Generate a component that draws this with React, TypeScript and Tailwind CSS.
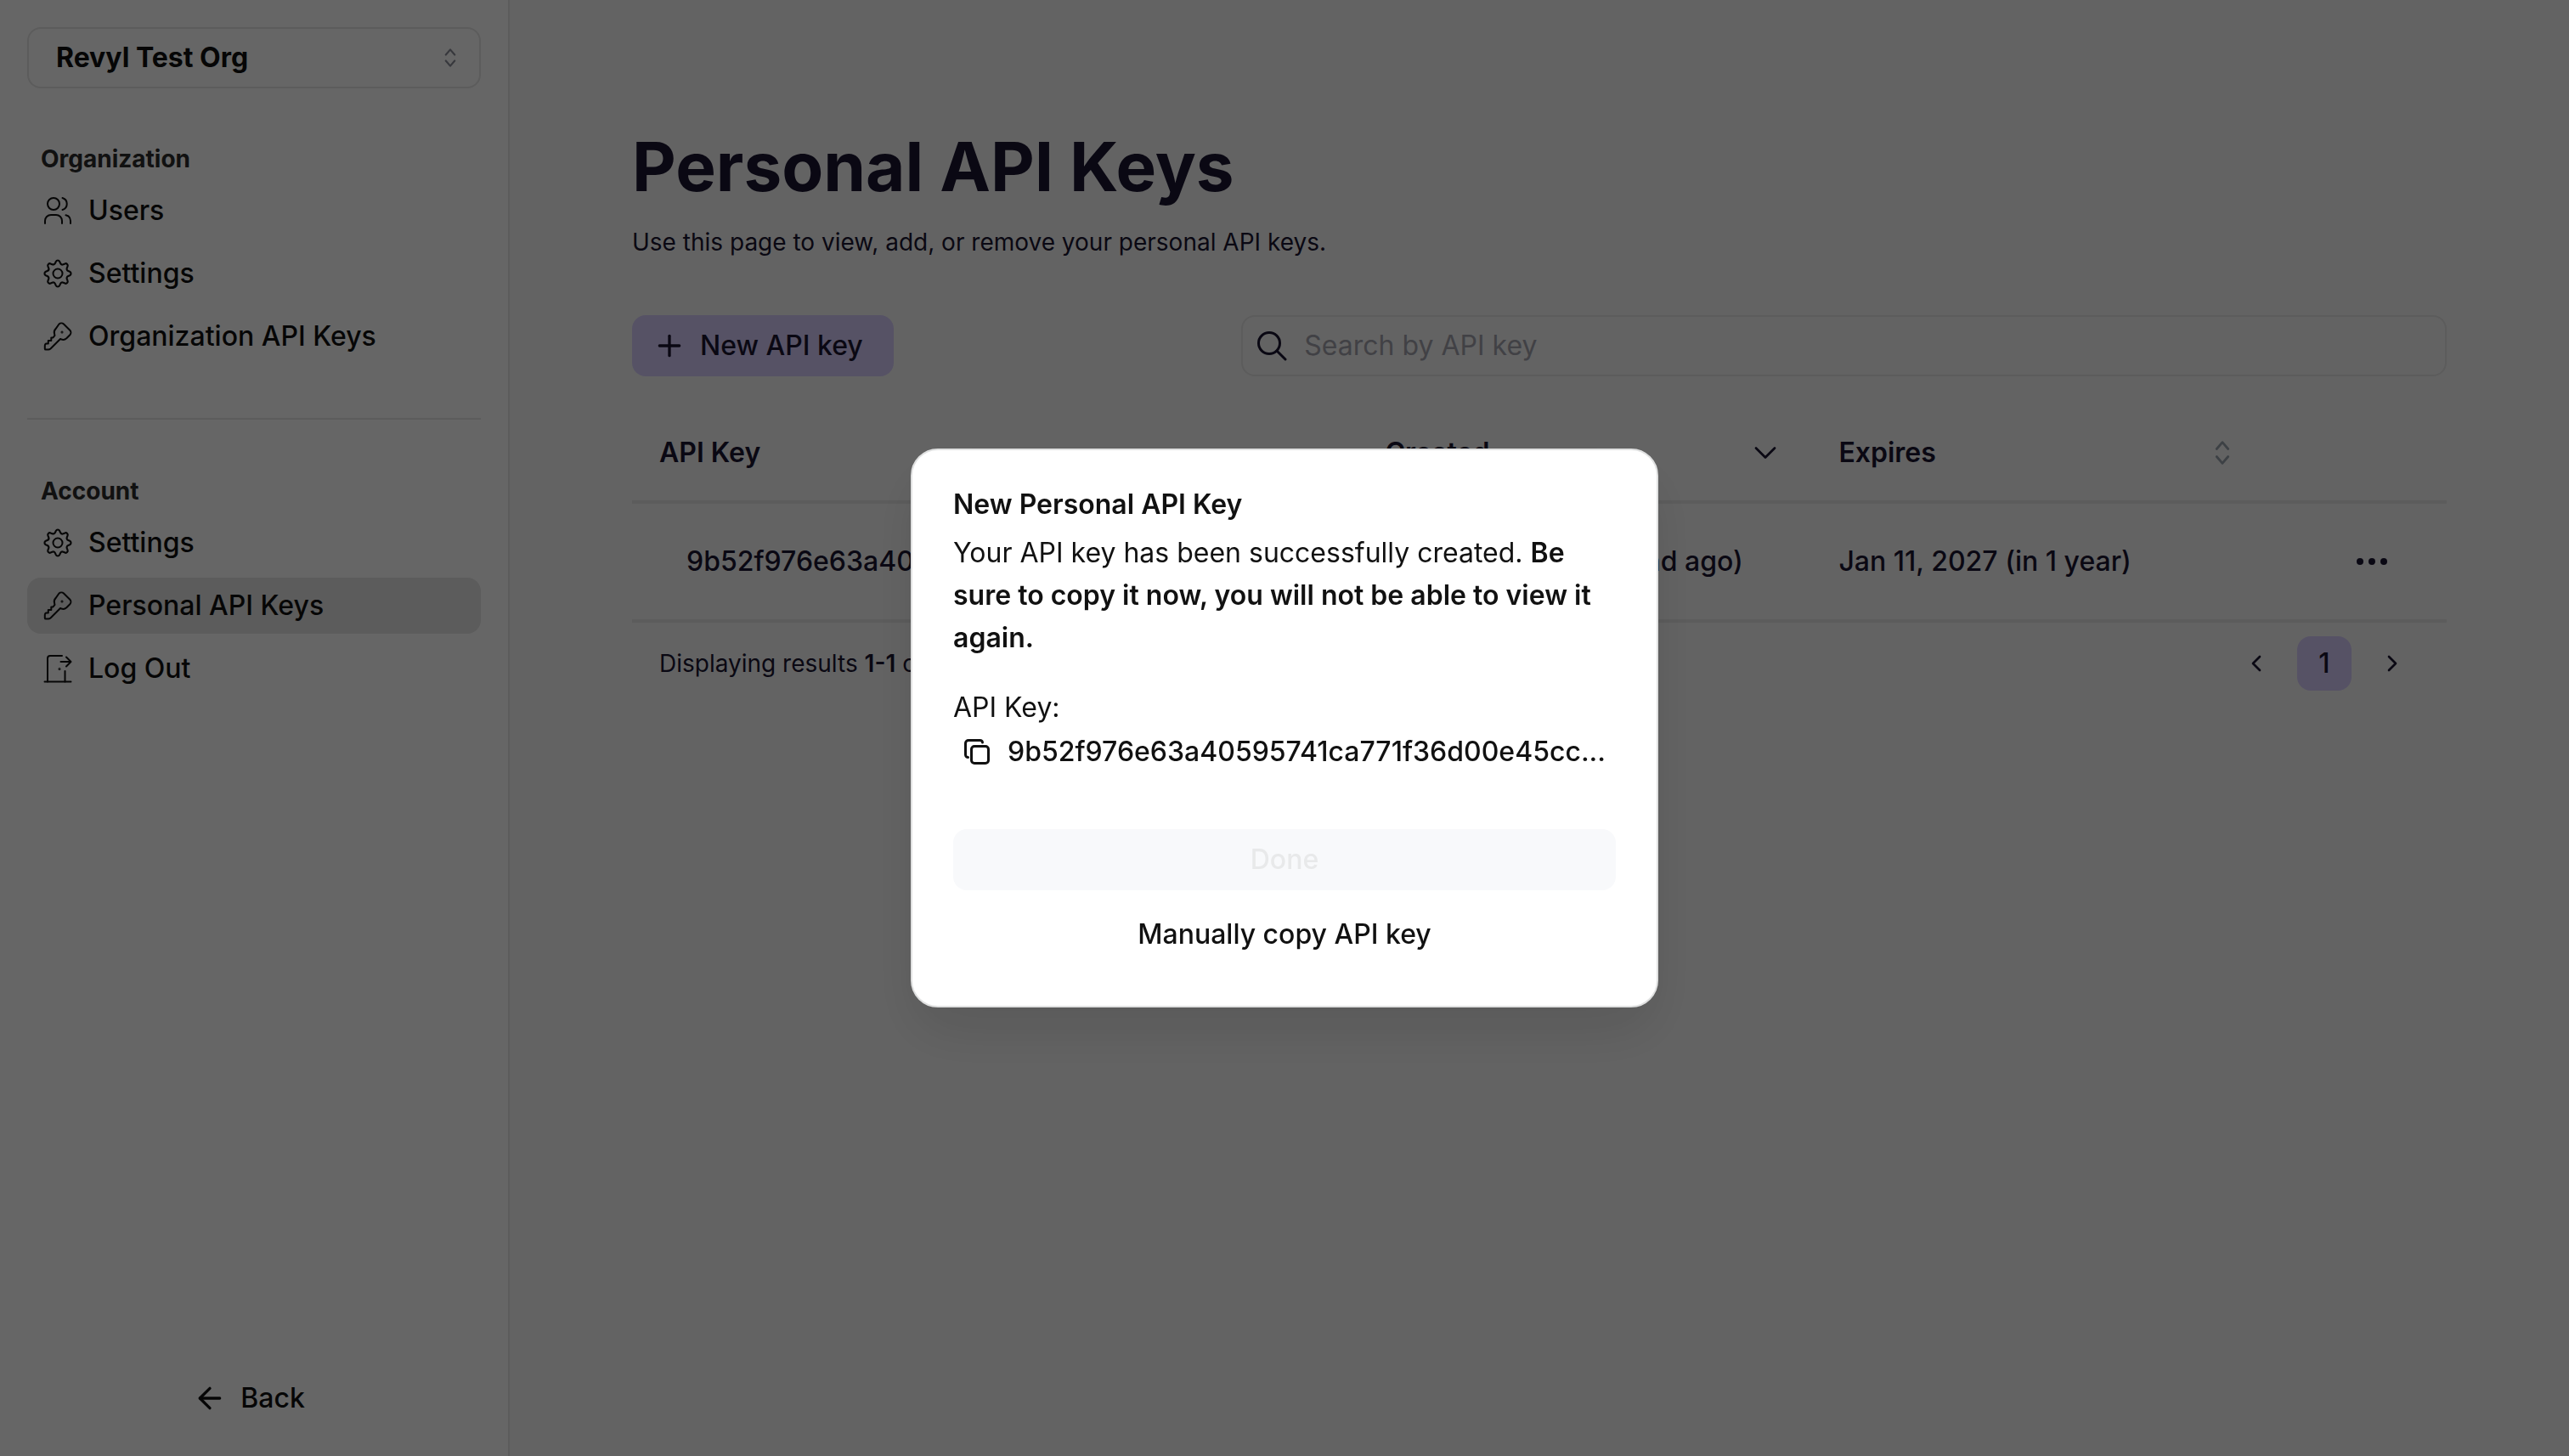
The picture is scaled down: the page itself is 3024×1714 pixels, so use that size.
import React from "react";
import { Plus, ArrowLeft, ChevronDown, ChevronLeft, ChevronRight } from "lucide-react";

type IconProps = { className?: string };

const thin = {
  viewBox: "0 0 36 36",
  fill: "none",
  stroke: "currentColor",
  strokeWidth: 2,
  strokeLinecap: "round" as const,
  strokeLinejoin: "round" as const,
  "aria-hidden": true,
};

function UsersIcon() {
  return (
    <svg {...thin} className="size-9 shrink-0">
      <circle cx="13" cy="10" r="7" />
      <path d="M23.5 3a7.3 7.3 0 0 1 0 14" />
      <path d="M3 33v-3a7 7 0 0 1 7-7h6a7 7 0 0 1 7 7v3" />
      <path d="M27.500 23.300a7 7 0 0 1 5.500 6.700v3" />
    </svg>
  );
}

function GearIcon() {
  return (
    <svg {...thin} className="size-9 shrink-0">
      <circle cx="18" cy="18" r="5.500" />
      <path d="M16 4.300a2.200 2.200 0 0 1 4 0l.7 1.700a2.600 2.600 0 0 0 3.400 1.400l1.700-.7a2.200 2.200 0 0 1 2.900 2.900l-.7 1.700a2.600 2.600 0 0 0 1.400 3.400l1.700.7a2.200 2.200 0 0 1 0 4l-1.700.7a2.600 2.600 0 0 0-1.400 3.400l.7 1.700a2.200 2.200 0 0 1-2.900 2.900l-1.700-.7a2.600 2.600 0 0 0-3.400 1.400l-.7 1.700a2.200 2.200 0 0 1-4 0l-.7-1.700a2.600 2.600 0 0 0-3.400-1.400l-1.700.7a2.200 2.200 0 0 1-2.900-2.900l.7-1.700a2.600 2.600 0 0 0-1.400-3.400l-1.700-.7a2.200 2.200 0 0 1 0-4l1.700-.7a2.600 2.600 0 0 0 1.400-3.400l-.7-1.700a2.200 2.200 0 0 1 2.900-2.900l1.700.7a2.600 2.600 0 0 0 3.400-1.400z" transform="translate(18 18) scale(1.08) translate(-18 -17.400)" />
    </svg>
  );
}

function KeyIcon() {
  return (
    <svg {...thin} className="size-9 shrink-0">
      <path d="M19.500 3.500a4 4 0 0 1 5.500 0l7.300 7.300a4 4 0 0 1 0 5.500l-4 4a6 6 0 0 1-6 1.200l-1.300-.5L9.500 32.500A4 4 0 0 1 6.700 33.600H4a1.200 1.200 0 0 1-1.200-1.200v-3.600q0-1.600 1.500-2.300h2.500v-3.600h3.500v-3.500h2.200l2-2.500-.4-1.600a6 6 0 0 1 1.300-6z" />
      <circle cx="23" cy="13" r=".5" />
    </svg>
  );
}

function DoorIcon() {
  return (
    <svg {...thin} className="size-9 shrink-0">
      <path d="M2.500 33.500h31" />
      <path d="M6 33.500V6a3 3 0 0 1 3-3h14" />
      <path d="M26.500 21v12.500" />
      <path d="M21.500 10h12M28 4.500l5.500 5.500-5.500 5.500" />
      <circle cx="20" cy="18.500" r=".5" />
    </svg>
  );
}

function CopyIcon() {
  return (
    <svg viewBox="0 0 32 32" fill="none" stroke="currentColor" strokeWidth="3" strokeLinecap="round" strokeLinejoin="round" aria-hidden className="size-8 shrink-0">
      <rect x="9.500" y="9.500" width="20" height="20" rx="3.500" />
      <path d="M5.500 22.500A3 3 0 0 1 2.500 19.500V6A3.500 3.500 0 0 1 6 2.500H19.500A3 3 0 0 1 22.500 5" />
    </svg>
  );
}

function SortIcon({ className }: IconProps) {
  return (
    <svg viewBox="0 0 32 32" fill="none" stroke="currentColor" strokeWidth="2.500" strokeLinecap="round" strokeLinejoin="round" aria-hidden className={className}>
      <path d="M10 12l6-7 6 7M10 20l6 7 6-7" />
    </svg>
  );
}

function SearchIcon() {
  return (
    <svg viewBox="0 0 36 36" fill="none" stroke="currentColor" strokeWidth="3" strokeLinecap="round" aria-hidden className="size-9 shrink-0">
      <circle cx="15" cy="15" r="12.500" />
      <path d="M24 24l10 10" />
    </svg>
  );
}

function NavItem({ icon, label, active = false }: { icon: React.ReactNode; label: string; active?: boolean }) {
  return (
    <a
      href="#"
      aria-current={active ? "page" : undefined}
      className={
        active
          ? "flex h-[66px] items-center gap-[18px] rounded-2xl bg-[#e5e5e5] px-[18px]"
          : "flex h-[66px] items-center gap-[18px] rounded-2xl px-[18px]"
      }
    >
      {icon}
      {label}
    </a>
  );
}

function NavSection({ title, children }: { title: string; children: React.ReactNode }) {
  return (
    <section>
      <h2 className="px-4 text-[28px] leading-[42px] font-bold text-[#2b2b2b]">{title}</h2>
      <div className="mt-[7px] flex flex-col gap-2">{children}</div>
    </section>
  );
}

function Sidebar() {
  return (
    <aside className="flex w-[600px] shrink-0 flex-col border-r-2 border-[#e5e5e5] bg-white px-8 pt-8 pb-8 text-[32px] leading-[48px] font-medium text-[#111111]">
      <button type="button" className="flex h-[72px] items-center justify-between rounded-2xl border-2 border-[#e5e5e5] pr-5 pl-8 font-bold">
        Revyl Test Org
        <SortIcon className="size-7 text-[#8b8d98]" />
      </button>
      <nav className="mt-[62px]">
        <NavSection title="Organization">
          <NavItem icon={<UsersIcon />} label="Users" />
          <NavItem icon={<GearIcon />} label="Settings" />
          <NavItem icon={<KeyIcon />} label="Organization API Keys" />
        </NavSection>
        <hr className="my-[63px] border-t-2 border-[#e5e5e5]" />
        <NavSection title="Account">
          <NavItem icon={<GearIcon />} label="Settings" />
          <NavItem icon={<KeyIcon />} label="Personal API Keys" active />
          <NavItem icon={<DoorIcon />} label="Log Out" />
        </NavSection>
      </nav>
      <a href="#" className="mt-auto flex h-[72px] items-center justify-center gap-4 pr-3">
        <ArrowLeft className="size-10" strokeWidth={2} aria-hidden />
        Back
      </a>
    </aside>
  );
}

function KeysTable() {
  return (
    <table className="mt-[34px] w-full table-fixed border-collapse text-left">
      <colgroup>
        <col className="w-[40%]" />
        <col className="w-[25%]" />
        <col className="w-[25%]" />
        <col className="w-[10%]" />
      </colgroup>
      <thead>
        <tr className="h-[114px] border-b-4 border-[#e5e5e5]">
          <th className="px-8 font-semibold">API Key</th>
          <th className="font-semibold">
            <button type="button" className="flex w-full items-center justify-between px-8">
              Created
              <ChevronDown className="size-11" strokeWidth={1.5} aria-hidden />
            </button>
          </th>
          <th className="font-semibold">
            <button type="button" className="flex w-full items-center justify-between px-8">
              Expires
              <SortIcon className="size-9 text-[#9aa3ad]" />
            </button>
          </th>
          <th aria-label="Actions" />
        </tr>
      </thead>
      <tbody>
        <tr className="h-[140px] border-b-4 border-[#e5e5e5] font-medium">
          <td className="truncate px-16">9b52f976e63a40595741...</td>
          <td className="pl-8 whitespace-nowrap">Jan 11, 2026 (1 second ago)</td>
          <td className="pl-8 whitespace-nowrap">Jan 11, 2027 (in 1 year)</td>
          <td>
            <button type="button" aria-label="More actions" className="ml-auto mr-16 flex size-12 items-center justify-center">
              <svg viewBox="0 0 40 12" fill="currentColor" aria-hidden className="h-3 w-10">
                <circle cx="6" cy="6" r="4" />
                <circle cx="20" cy="6" r="4" />
                <circle cx="34" cy="6" r="4" />
              </svg>
            </button>
          </td>
        </tr>
      </tbody>
    </table>
  );
}

function Main() {
  return (
    <main className="flex-1 bg-[#f8f8f8] px-36 pt-[136px] text-[32px] leading-[48px] text-[#1a1530]">
      <h1 className="text-[80px] leading-[120px] font-bold">Personal API Keys</h1>
      <p className="mt-2 text-[28px] leading-[42px]">Use this page to view, add, or remove your personal API keys.</p>
      <div className="mt-[65px] grid grid-cols-3 gap-4">
        <button type="button" className="flex h-[72px] items-center gap-4 justify-self-start rounded-2xl bg-[#d7cdfd] pr-9 pl-6 font-medium">
          <Plus className="size-10" strokeWidth={2} aria-hidden />
          New API key
        </button>
        <label className="col-span-2 flex h-[72px] items-center gap-5 rounded-2xl border-2 border-[#e5e5e5] px-4">
          <SearchIcon />
          <input type="search" aria-label="Search by API key" placeholder="Search by API key" className="min-w-0 flex-1 bg-transparent outline-none placeholder:text-[#a3a3ad]" />
        </label>
      </div>
      <KeysTable />
      <div className="mt-4 flex items-center justify-between px-8">
        <p className="text-[28px] leading-[42px]">
          Displaying results <b className="font-semibold">1-1</b> of <b className="font-semibold">1</b>
        </p>
        <nav aria-label="Pagination" className="flex items-center gap-4">
          <button type="button" aria-label="Previous page" className="flex size-16 items-center justify-center">
            <ChevronLeft className="size-8" aria-hidden />
          </button>
          <button type="button" aria-current="page" className="size-16 rounded-2xl bg-[#d7cdfd] font-medium">1</button>
          <button type="button" aria-label="Next page" className="flex size-16 items-center justify-center">
            <ChevronRight className="size-8" aria-hidden />
          </button>
        </nav>
      </div>
    </main>
  );
}

function KeyDialog() {
  return (
    <div className="fixed inset-0 flex items-center justify-center bg-black/60">
      <div
        role="dialog"
        aria-modal="true"
        aria-labelledby="dialog-title"
        className="w-[880px] rounded-[32px] border-2 border-[#e0e1e1] bg-white px-12 pt-10 pb-12 text-[32px] leading-[50px] text-[#111111] shadow-[0_32px_64px_-8px_rgba(0,0,0,0.12)]"
      >
        <h2 id="dialog-title" className="leading-[48px] font-semibold">New Personal API Key</h2>
        <p className="mt-2">
          Your API key has been successfully created.{" "}
          <strong className="font-semibold">Be sure to copy it now, you will not be able to view it again.</strong>
        </p>
        <p className="mt-8">API Key:</p>
        <button type="button" className="flex h-[54px] w-full items-center gap-5 px-3 font-medium">
          <CopyIcon />
          9b52f976e63a40595741ca771f36d00e45cc...
        </button>
        <button type="button" disabled className="mt-16 h-[72px] w-full rounded-2xl bg-[#f8f9fb] font-medium text-[#e8e9ea]">
          Done
        </button>
        <button type="button" className="mt-4 h-[72px] w-full rounded-2xl font-medium">Manually copy API key</button>
      </div>
    </div>
  );
}

export default function App() {
  return (
    <div className="flex min-h-screen font-['Inter',sans-serif]">
      <Sidebar />
      <Main />
      <KeyDialog />
    </div>
  );
}
